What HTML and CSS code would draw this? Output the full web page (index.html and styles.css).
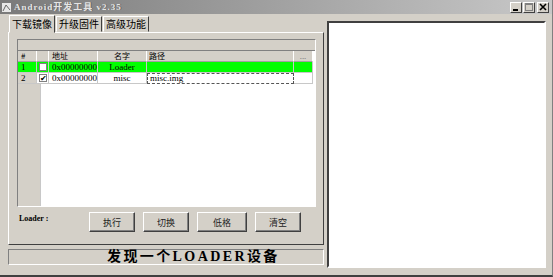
FILE: index.html
```html
<!DOCTYPE html>
<html lang="zh-CN">
<head>
    <meta charset="UTF-8">
    <title>Android开发工具</title>
    <link rel="stylesheet" href="styles.css">
</head>
<body>
    <div class="window">
        <div class="titlebar">
            <svg class="app-icon" width="9" height="9" viewBox="0 0 9 9">
                <rect x="0" y="0" width="9" height="9" fill="#e8e8e8"/>
                <path d="M1 8 L4 2 L8 7" stroke="#666" fill="none"/>
            </svg>
            <span class="title">Android开发工具 v2.35</span>
            <div class="controls">
                <span class="ctl">
                    <svg width="8" height="8" viewBox="0 0 8 8"><rect x="1" y="6" width="5" height="2" fill="#000"/></svg>
                </span>
                <span class="ctl">
                    <svg width="8" height="8" viewBox="0 0 8 8"><rect x="0.5" y="0.5" width="7" height="7" fill="none" stroke="#808080"/><rect x="0" y="0" width="8" height="2" fill="#808080"/></svg>
                </span>
                <span class="ctl close">
                    <svg width="8" height="8" viewBox="0 0 8 8"><path d="M1 1 L7 7 M7 1 L1 7" stroke="#000" stroke-width="1.6"/></svg>
                </span>
            </div>
        </div>

        <div class="main">
            <div class="left">
                <div class="tabs">
                    <span class="tab active">下载镜像</span>
                    <span class="tab">升级固件</span>
                    <span class="tab">高级功能</span>
                </div>
                <div class="panel">
                    <div class="grid">
                        <div class="grid-top"></div>
                        <div class="row head">
                            <span class="c-num">#</span>
                            <span class="c-chk"></span>
                            <span class="c-addr">地址</span>
                            <span class="c-name">名字</span>
                            <span class="c-path">路径</span>
                            <span class="c-more">...</span>
                        </div>
                        <div class="row green">
                            <span class="c-num">1</span>
                            <span class="c-chk"><i class="box"></i></span>
                            <span class="c-addr">0x00000000</span>
                            <span class="c-name">Loader</span>
                            <span class="c-path"></span>
                            <span class="c-more"></span>
                        </div>
                        <div class="row">
                            <span class="c-num">2</span>
                            <span class="c-chk"><i class="box checked">✔</i></span>
                            <span class="c-addr">0x00000000</span>
                            <span class="c-name">misc</span>
                            <span class="c-path editing">misc.img</span>
                            <span class="c-more"></span>
                        </div>
                        <div class="grid-rest">
                            <span class="c-num"></span>
                        </div>
                    </div>
                    <div class="actions">
                        <span class="loader-label">Loader :</span>
                        <button type="button" class="btn">执行</button>
                        <button type="button" class="btn">切换</button>
                        <button type="button" class="btn wide">低格</button>
                        <button type="button" class="btn">清空</button>
                    </div>
                </div>
                <div class="status">发现一个LOADER设备</div>
            </div>
            <div class="log"></div>
        </div>
    </div>
</body>
</html>
```

FILE: styles.css
```css
body {
    margin: 0;
    padding: 0;
    background: #d4d0c8;
    font-family: 'Noto Sans CJK SC', 'DejaVu Sans', sans-serif;
}
.window {
    width: 553px;
    height: 277px;
    box-sizing: border-box;
    background: #d4d0c8;
    border-bottom: 2px solid #404040;
    border-right: 1px solid #808080;
    overflow: hidden;
}
.titlebar {
    height: 14px;
    display: flex;
    align-items: center;
    background: linear-gradient(to right, #7a7a7a, #c8c8c8);
    padding-left: 2px;
}
.app-icon {
    margin-right: 3px;
}
.title {
    font-family: 'Liberation Serif', 'Noto Sans CJK SC', serif;
    font-size: 9px;
    font-weight: bold;
    letter-spacing: 1px;
    color: #e4e4e4;
    text-shadow: 1px 0 0 #666;
    line-height: 14px;
}
.controls {
    margin-left: auto;
    display: flex;
    gap: 1px;
    margin-right: 3px;
}
.ctl {
    width: 10px;
    height: 9px;
    background: #d4d0c8;
    border: 1px solid;
    border-color: #fff #404040 #404040 #fff;
    display: flex;
    align-items: center;
    justify-content: center;
}
.close {
    margin-left: 1px;
}
.main {
    display: flex;
    padding: 2px 0 0 8px;
}
.left {
    width: 316px;
}
.tabs {
    display: flex;
    height: 16px;
    align-items: flex-end;
    padding-left: 1px;
}
.tab {
    font-size: 10px;
    line-height: 14px;
    height: 14px;
    padding: 0 2px;
    border: 1px solid;
    border-color: #fff #404040 transparent #fff;
    margin-right: 1px;
}
.tab.active {
    height: 16px;
    line-height: 16px;
    border-bottom: 1px solid #d4d0c8;
    margin-bottom: -1px;
    position: relative;
}
.panel {
    height: 213px;
    box-sizing: border-box;
    border: 1px solid;
    border-color: #fff #404040 #404040 #fff;
    padding: 6px 7px 0 8px;
}
.grid {
    height: 168px;
    box-sizing: border-box;
    background: #fff;
    border: 1px solid #a0a0a0;
    border-color: #808080 #fff #fff #808080;
    display: flex;
    flex-direction: column;
    font-size: 9px;
}
.grid-top {
    height: 10px;
    background: #d4d0c8;
    border-bottom: 1px solid #808080;
}
.row {
    display: flex;
    height: 11px;
    line-height: 10px;
    font-family: 'Liberation Serif', 'Noto Sans CJK SC', serif;
    font-size: 9px;
}
.row span {
    box-sizing: border-box;
    border-right: 1px solid #c8c8c8;
    border-bottom: 1px solid #c8c8c8;
    overflow: hidden;
    white-space: nowrap;
}
.row.head span {
    background: #d4d0c8;
    border-right: 1px solid #fff;
    border-bottom: 1px solid #a0a0a0;
    font-family: 'Noto Sans CJK SC', sans-serif;
    font-size: 8px;
    line-height: 10px;
    overflow: visible;
}
.c-num {
    width: 19px;
    padding-left: 3px;
    background: #d4d0c8;
}
.c-chk {
    width: 12px;
    display: flex;
    align-items: center;
    justify-content: center;
}
.c-addr {
    width: 49px;
    padding-left: 3px;
}
.c-name {
    width: 49px;
    text-align: center;
}
.c-path {
    width: 147px;
    padding-left: 2px;
}
.c-more {
    width: 19px;
    text-align: center;
    color: #808080;
}
.green span {
    background: #00ff00;
}
.box {
    display: block;
    width: 8px;
    height: 8px;
    box-sizing: border-box;
    background: #fff;
    border: 1px solid #808080;
    font-style: normal;
    font-size: 8px;
    line-height: 7px;
    text-align: center;
}
.row .editing {
    border: 1px dashed #555;
    line-height: 8px;
}
.grid-rest {
    flex: 1;
    display: flex;
}
.grid-rest .c-num {
    border-right: 1px solid #c8c8c8;
}
.actions {
    display: flex;
    align-items: flex-start;
    padding-top: 5px;
}
.loader-label {
    font-family: 'Liberation Serif', serif;
    font-size: 8px;
    font-weight: bold;
    width: 70px;
    padding: 2px 0 0 2px;
}
.btn {
    width: 46px;
    height: 20px;
    margin-right: 8px;
    background: #d4d0c8;
    border: 1px solid;
    border-color: #fff #404040 #404040 #fff;
    box-shadow: inset -1px -1px 0 #808080;
    font-family: 'Noto Sans CJK SC', sans-serif;
    font-size: 9px;
    color: #222;
    padding: 0;
}
.btn.wide {
    width: 50px;
}
.status {
    margin-top: 4px;
    height: 16px;
    box-sizing: border-box;
    border: 1px solid;
    border-color: #808080 #fff #fff #808080;
    padding-left: 98px;
    font-size: 14px;
    font-weight: bold;
    letter-spacing: 2.4px;
    line-height: 14px;
    font-family: 'Liberation Serif', 'Noto Sans CJK SC', serif;
    white-space: nowrap;
}
.log {
    margin: 5px 0 0 3px;
    width: 219px;
    height: 247px;
    box-sizing: border-box;
    background: #fff;
    border: 2px solid;
    border-color: #404040 #fff #fff #404040;
}
```
